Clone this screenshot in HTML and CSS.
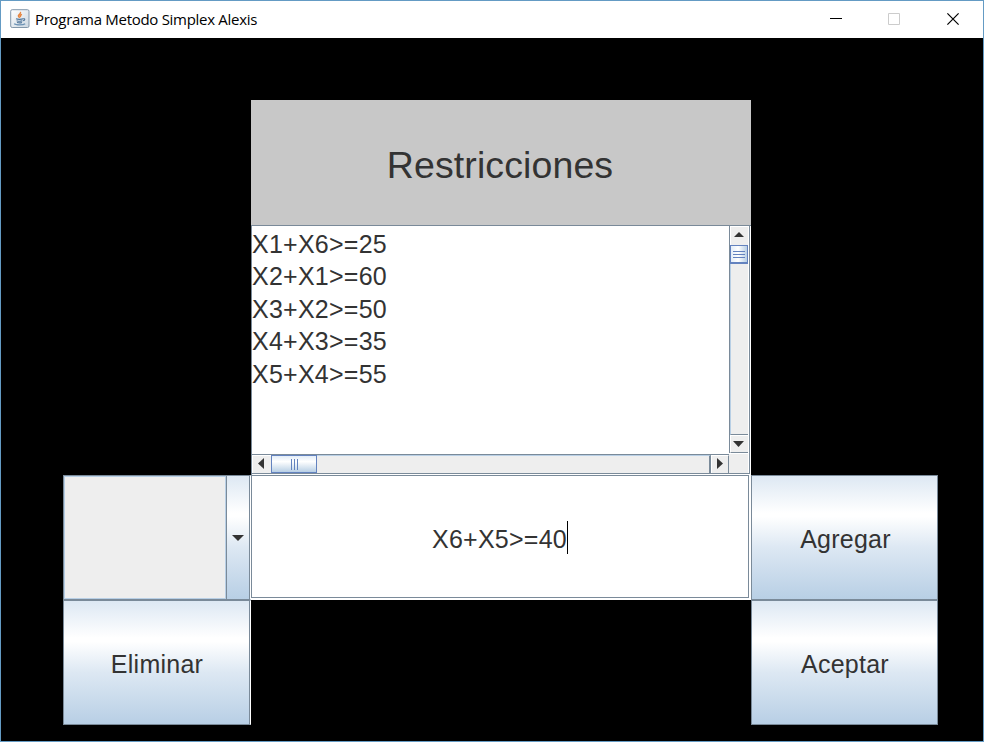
FILE: index.html
```html
<!DOCTYPE html>
<html lang="es">
<head>
<meta charset="utf-8">
<title>Programa Metodo Simplex Alexis</title>
<link rel="stylesheet" href="styles.css">
</head>
<body>
<div class="window">
  <header class="titlebar">
    <svg class="app-icon" width="20" height="20" viewBox="0 0 20 20" fill="none">
      <defs><linearGradient id="tile" x1="0" y1="0" x2="1" y2="1"><stop offset="0" stop-color="#fff"/><stop offset="1" stop-color="#cbd7e1"/></linearGradient></defs>
      <rect x=".7" y=".7" width="18.3" height="17.8" rx="1.5" fill="url(#tile)" stroke="#8297aa"/>
      <path d="M10.300 3c1.500 1.800-2.800 2.800-1.800 4.400.4.600 1 .9 1.100 1.500M11.900 5.400c-2 1-1.800 1.700-1.200 2.600" stroke="#e6833c" stroke-width="1.5"/>
      <path d="M6 9.800c1.500.7 5.500.7 7.200 0M6.600 11.700c1.800.6 4.300.6 5.800 0M7 13.400c1.500.5 3.800.5 5 0M13.200 9.800c2.200-.6 2 1.500-.1 1.900" stroke="#51779c" stroke-width="1.100"/>
      <path d="M4.200 14.600c1.600 1.700 9 1.700 11 .1" stroke="#6d93b5" stroke-width="1.300"/>
    </svg>
    <span class="caption">Programa Metodo Simplex Alexis</span>
    <div class="controls">
      <svg width="58" height="37" viewBox="0 0 58 37"><path d="M23 17.5h12" stroke="#000"/></svg>
      <svg width="58" height="37" viewBox="0 0 58 37"><path d="M23.5 12.5h11v11h-11z" fill="none" stroke="#ccc"/></svg>
      <svg class="close" width="58" height="37" viewBox="0 0 58 37"><path d="M23.4 12.4l11.2 11.2M34.6 12.4L23.4 23.6" stroke="#000" stroke-width="1.2"/></svg>
    </div>
  </header>
  <main class="content">
    <h1 class="heading">Restricciones</h1>
    <section class="scrollpane">
      <div class="list">
        <div>X1+X6&gt;=25</div>
        <div>X2+X1&gt;=60</div>
        <div>X3+X2&gt;=50</div>
        <div>X4+X3&gt;=35</div>
        <div>X5+X4&gt;=55</div>
      </div>
      <div class="vbar">
        <div class="step up"><svg width="10" height="5" viewBox="0 0 10 5"><path d="M5 0l5 5H0z" fill="#333"/></svg></div>
        <div class="vthumb"><i></i><i></i><i></i></div>
        <div class="vtrack"></div>
        <div class="step down"><svg width="11" height="6" viewBox="0 0 11 6"><path d="M0 0h11L5.500 6z" fill="#333"/></svg></div>
      </div>
      <div class="hbar">
        <div class="step left"><svg width="6" height="11" viewBox="0 0 6 11"><path d="M6 0v11L0 5.500z" fill="#333"/></svg></div>
        <div class="hthumb"><i></i><i></i><i></i></div>
        <div class="htrack"></div>
        <div class="step right"><svg width="6" height="11" viewBox="0 0 6 11"><path d="M0 0v11l6-5.500z" fill="#333"/></svg></div>
      </div>
      <div class="corner"></div>
    </section>
    <div class="combo">
      <div class="combo-value"></div>
      <div class="combo-arrow"><svg width="12" height="6" viewBox="0 0 12 6"><path d="M0 0h12L6 6z" fill="#333"/></svg></div>
    </div>
    <div class="field"><div class="field-inner"><span>X6+X5&gt;=40</span><b class="caret"></b></div></div>
    <button class="btn add">Agregar</button>
    <button class="btn remove">Eliminar</button>
    <button class="btn accept">Aceptar</button>
  </main>
</div>
</body>
</html>
```
FILE: styles.css
```css
* { box-sizing: border-box; }
body {
  margin: 0;
  width: 984px;
  height: 742px;
  overflow: hidden;
  font: 25px "Liberation Sans", sans-serif;
  letter-spacing: 0.25px;
  color: #333;
}
svg { display: block; flex: none; }
.window {
  height: 742px;
  border: 1px solid #649bc4;
  background: #000;
  display: flex;
  flex-direction: column;
}
.titlebar {
  height: 37px;
  flex: none;
  background: #fff;
  display: flex;
  align-items: center;
  padding-left: 9px;
}
.app-icon { margin-top: -1px; }
.caption {
  margin-left: 5px;
  padding-bottom: 2px;
  font: 15px "Open Sans", "Noto Sans", sans-serif;
  letter-spacing: -0.29px;
  color: #000;
  white-space: nowrap;
}
.controls { display: flex; margin-left: auto; margin-right: 1px; }
.close { margin-left: 1px; }

.content {
  display: grid;
  grid-template-columns: 188px 500px 187px;
  grid-template-rows: 125px 250px 125px 125px;
  padding: 62px 0 0 62px;
}
.heading {
  grid-area: 1 / 2;
  margin: 0;
  background: #c8c8c8;
  display: flex;
  align-items: center;
  justify-content: center;
  font-size: 37.5px;
  font-weight: 400;
  letter-spacing: 0.1px;
  padding: 5px 2px 0 0;
}

.scrollpane {
  grid-area: 2 / 2;
  background: #fff;
  border: solid #7a8a99;
  border-width: 1px 0 0 1px;
  display: grid;
  grid-template-columns: 477px 19px;
  grid-template-rows: 228px 19px;
  position: relative;
}
.scrollpane::after {
  content: "";
  position: absolute;
  left: 0;
  top: 0;
  width: 497px;
  height: 247px;
  border: solid #7a8a99;
  border-width: 0 1px 1px 0;
}
.list { line-height: 32.4px; padding-top: 2px; }
.vbar {
  border-left: 1px solid #7a8a99;
  width: 19px;
  height: 227px;
  display: flex;
  flex-direction: column;
}
.step {
  background: #eee;
  display: flex;
  align-items: center;
  justify-content: center;
  flex: none;
}
.up { height: 19px; border: solid #fff; border-width: 1px 0 0 1px; padding: 0 2px 3px 0; }
.down { height: 18px; border: solid #fff; border-width: 1px 0 0 1px; border-bottom: 1px solid #7a8a99; padding: 0 2px 1px 0; }
.vthumb {
  height: 19px;
  border: 1px solid #6382bf;
  border-bottom-width: 2px;
  background: linear-gradient(90deg, #e3edf8, #fff 45%, #b8cfe5);
  display: flex;
  flex-direction: column;
  justify-content: center;
  align-items: center;
  gap: 2px;
}
.vthumb i { width: 12px; height: 1px; background: #6382bf; }
.vtrack { flex: 1; background: #eee; border-bottom: 1px solid #7a8a99; border-left: 1px solid #b8cfe5; }
.hbar { border-top: 1px solid #7a8a99; display: flex; height: 19px; }
.left { width: 19px; border: solid #fff; border-width: 1px 0 0 1px; padding: 0 3px 2px 0; }
.right { width: 18px; border: 1px solid #fff; border-right-color: #7a8a99; border-bottom: 0; padding-bottom: 2px; }
.hthumb {
  width: 46px;
  border: 1px solid #6382bf;
  background: linear-gradient(#e3edf8, #fff 35%, #b8cfe5);
  display: flex;
  justify-content: center;
  align-items: center;
  gap: 2px;
}
.hthumb i { width: 1px; height: 11px; background: #6382bf; }
.htrack { flex: 1; background: #eee; border-right: 2px solid #7a8a99; border-top: 1px solid #b8cfe5; }
.corner { background: #eee; }

.combo {
  grid-area: 3 / 1;
  display: flex;
  border: 1px solid #7a8a99;
  border-right-color: #fff;
}
.combo-value { width: 162px; background: #eee; border: 1px solid #b8cfe5; }
.combo-arrow {
  flex: 1;
  border: solid #7a8a99;
  border-width: 0 1px;
  background: linear-gradient(#dde8f3, #fff 30%, #fff 33%, #dde8f3 58%, #b8cfe5);
  display: flex;
  align-items: center;
  justify-content: center;
}
.field { grid-area: 3 / 2; background: #fff; padding: 0 2px 2px 0; }
.field-inner {
  height: 123px;
  border: 1px solid #7a8a99;
  width: 498px;
  display: flex;
  align-items: center;
  justify-content: center;
  padding-top: 6px;
}
.caret { width: 1px; height: 33px; background: #000; margin-top: -5px; }
.btn {
  font: inherit;
  letter-spacing: inherit;
  color: #333;
  margin: 0;
  padding: 3px 0 0;
  border: 1px solid #7a8a99;
  border-radius: 0;
  background: linear-gradient(#dde8f3, #fff 30%, #fff 33%, #dde8f3 58%, #b8cfe5);
}
.add { grid-area: 3 / 3; padding-left: 2px; }
.remove { grid-area: 4 / 1; box-shadow: inset -1px 0 #7a8a99; border-right-color: #fff; }
.accept { grid-area: 4 / 3; padding-left: 1px; }
```
